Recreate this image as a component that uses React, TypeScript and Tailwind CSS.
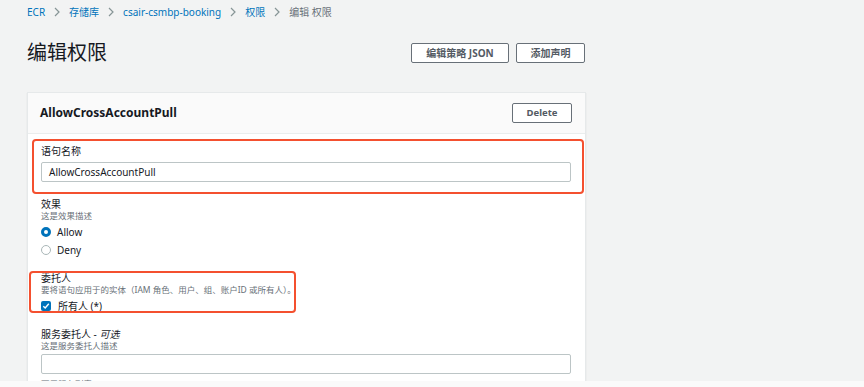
import React from "react";

const font = { fontFamily: '"Noto Sans", "Noto Sans CJK SC", sans-serif' };

function Chevron() {
  return (
    <svg width="6" height="10" viewBox="0 0 6 10" className="shrink-0">
      <path d="M1 1 L5 5 L1 9" fill="none" stroke="#879596" strokeWidth="1.2" />
    </svg>
  );
}

function Radio({ checked }: { checked: boolean }) {
  return checked ? (
    <span className="w-[10px] h-[10px] rounded-full border-[3px] border-[#0073bb] bg-white box-border shrink-0" />
  ) : (
    <span className="w-[10px] h-[10px] rounded-full border border-[#aab7b8] bg-white box-border shrink-0" />
  );
}

export default function App() {
  return (
    <div className="w-[864px] h-[387px] overflow-hidden flex flex-col bg-[#f2f3f3]" style={font}>
      <div className="h-[381px] overflow-hidden pl-[27px]">
        <div className="w-[559px]">
          {/* breadcrumb */}
          <div className="flex items-center gap-[9px] pt-[4px] h-[19px] text-[10px] leading-[14px]">
            <span className="text-[#0073bb]">ECR</span>
            <Chevron />
            <span className="text-[#0073bb]">存储库</span>
            <Chevron />
            <span className="text-[#0073bb]">csair-csmbp-booking</span>
            <Chevron />
            <span className="text-[#0073bb]">权限</span>
            <Chevron />
            <span className="text-[#687078]">编辑 权限</span>
          </div>
          {/* title row */}
          <div className="flex items-center justify-between mt-[24px] h-[20px]">
            <h1 className="text-[20px] leading-[24px] text-[#16191f] font-normal">编辑权限</h1>
            <div className="flex gap-[7px] mr-[1px]">
              <button className="h-[20px] w-[98px] border border-[#687078] rounded-[2px] bg-white text-[10px] font-bold text-[#545b64] leading-none">
                编辑策略 JSON
              </button>
              <button className="h-[20px] w-[69px] border border-[#687078] rounded-[2px] bg-white text-[10px] font-bold text-[#545b64] leading-none">
                添加声明
              </button>
            </div>
          </div>
          {/* card */}
          <div className="relative mt-[29px] bg-white border border-[#e6e9ea] shadow-[0_1px_1px_0_rgba(0,28,36,0.12)]">
            <div className="h-[41px] bg-[#fafafa] border-b border-[#eaeded] flex items-center justify-between pl-[12px] pr-[13px]">
              <span className="text-[12px] font-bold text-[#16191f]">AllowCrossAccountPull</span>
              <button className="h-[20px] w-[60px] border border-[#687078] rounded-[2px] bg-white text-[9.5px] font-bold text-[#545b64] leading-none">
                Delete
              </button>
            </div>
            <div className="pl-[13px] pr-[14px] pt-[10px] pb-[20px]">
              <div className="text-[10px] leading-[14px] text-[#16191f]">语句名称</div>
              <div className="mt-[4px] h-[20px] border border-[#bcc5c6] rounded-[2px] flex items-center pl-[7px] text-[10px] text-[#16191f]">
                AllowCrossAccountPull
              </div>

              <div className="mt-[16px] text-[10px] leading-[12px] text-[#16191f]">效果</div>
              <div className="text-[8.5px] leading-[12px] text-[#687078]">这是效果描述</div>
              <div className="mt-[1px] flex items-center gap-[6px] h-[18px] text-[10px] text-[#16191f]">
                <Radio checked />
                <span>Allow</span>
              </div>
              <div className="flex items-center gap-[6px] h-[18px] text-[10px] text-[#16191f]">
                <Radio checked={false} />
                <span>Deny</span>
              </div>

              <div className="mt-[13px] text-[10px] leading-[12px] text-[#16191f]">委托人</div>
              <div className="text-[8.5px] leading-[12px] text-[#687078]">
                要将语句应用于的实体（IAM 角色、用户、组、账户ID 或所有人）。
              </div>
              <div className="mt-[3px] flex items-center gap-[7px] h-[14px] text-[10px] text-[#16191f]">
                <span className="w-[10px] h-[10px] rounded-[2px] bg-[#0073bb] flex items-center justify-center shrink-0">
                  <svg width="8" height="8" viewBox="0 0 8 8">
                    <path d="M1.3 4.2 L3.2 6 L6.8 1.8" fill="none" stroke="white" strokeWidth="1.4" />
                  </svg>
                </span>
                <span>所有人 (*)</span>
              </div>

              <div className="mt-[15px] text-[10px] leading-[12px] text-[#16191f]">
                服务委托人 - <i>可选</i>
              </div>
              <div className="text-[8.5px] leading-[12px] text-[#687078]">这是服务委托人描述</div>
              <div className="mt-[2px] h-[20px] border border-[#bcc5c6] rounded-[2px]" />
              <div className="mt-[4px] text-[8.5px] leading-[12px] text-[#687078]">可用服务列表</div>
            </div>

            {/* annotation overlays */}
            <div className="absolute left-[4px] top-[46px] w-[552px] h-[55px] border-2 border-[#f4502f] rounded-[4px] pointer-events-none" />
            <div className="absolute left-[1px] top-[178px] w-[267px] h-[42px] border-2 border-[#f4502f] rounded-[4px] pointer-events-none" />
          </div>
        </div>
      </div>
      <div className="h-[6px] bg-[#fafafa]" />
    </div>
  );
}
